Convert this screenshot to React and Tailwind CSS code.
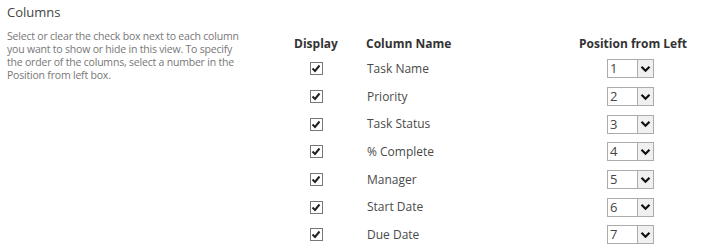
const rows = [
    "Task Name",
    "Priority",
    "Task Status",
    "% Complete",
    "Manager",
    "Start Date",
    "Due Date",
];

const helpLines = [
    "Select or clear the check box next to each column",
    "you want to show or hide in this view. To specify",
    "the order of the columns, select a number in the",
    "Position from left box.",
];

function CheckBox() {
    return (
        <span className="flex items-center justify-center w-[13px] h-[13px] border border-[#777] bg-white">
            <svg width="10" height="9" viewBox="0 0 10 9">
                <polyline points="1.5,4.5 4,7 8.5,1.5" fill="none" stroke="#222" strokeWidth="2" />
            </svg>
        </span>
    );
}

function PositionSelect({ value }) {
    return (
        <div className="flex h-[19px] w-[47px] border border-[#ababab] bg-white">
            <span className="flex-1 pl-[2px] text-[13px] leading-[17px] text-[#444]">{value}</span>
            <span className="flex items-center justify-center w-[16px] border-l border-[#ababab] bg-[#f0f0f0]">
                <svg width="11" height="8" viewBox="0 0 11 8">
                    <polyline points="1.5,1.8 5.5,5.8 9.5,1.8" fill="none" stroke="#111" strokeWidth="2.2" />
                </svg>
            </span>
        </div>
    );
}

export default function App() {
    return (
        <div className="w-[712px] h-[252px] bg-white flex font-['Open_Sans',sans-serif] overflow-hidden">
            <div className="w-[290px] pl-[7px] pt-[3px]">
                <p className="text-[13px] text-[#444]">Columns</p>
                <div className="mt-[7px] text-[10.5px] leading-[13px] text-[#777] tracking-[-0.2px]">
                    {helpLines.map((line, index) => (
                        <p key={index} className="whitespace-nowrap">{line}</p>
                    ))}
                </div>
            </div>

            <div className="flex-1 pt-[35px]">
                <div className="grid grid-cols-[52px_237px_1fr] h-[18px] items-center text-[12px] font-bold text-[#333]">
                    <p className="text-center">Display</p>
                    <p className="pl-[24px]">Column Name</p>
                    <p>Position from Left</p>
                </div>

                <div className="mt-[2px]">
                    {rows.map((name, index) => (
                        <div key={index} className="grid grid-cols-[52px_237px_1fr] h-[27.7px] items-center">
                            <div className="flex justify-center">
                                <CheckBox />
                            </div>
                            <p className="pl-[25px] text-[12px] text-[#4a4a4a]">{name}</p>
                            <div className="pl-[28px]">
                                <PositionSelect value={index + 1} />
                            </div>
                        </div>
                    ))}
                </div>
            </div>
        </div>
    );
}
